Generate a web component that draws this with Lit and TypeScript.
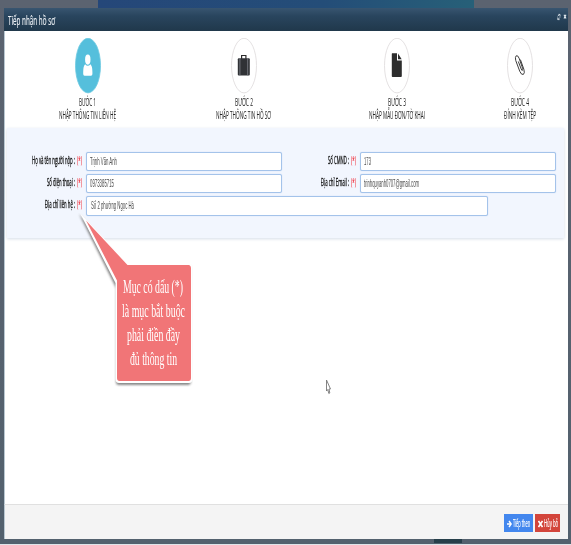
import { LitElement, html, css, svg } from "lit";
import { customElement, property } from "lit/decorators.js";

// One line of condensed text, scaled horizontally to the width it is given.
@customElement("fit-text")
export class FitText extends LitElement {
  static styles = css`
    :host { display: block; flex: none; white-space: nowrap; }
    .run { display: inline-block; vertical-align: top; transform-origin: 0 0; }
  `;
  @property({ type: Number }) w = 0;
  @property() text = "";

  render() {
    return html`<span class="run">${this.text}</span>`;
  }

  updated() {
    const run = this.renderRoot.querySelector<HTMLElement>(".run")!;
    run.style.transform = "none";
    const natural = run.getBoundingClientRect().width;
    this.style.width = `${this.w}px`;
    run.style.marginRight = `${this.w - natural}px`;
    run.style.transform = `scaleX(${this.w / natural})`;
  }
}

const line = (text: string, w: number, cls: string) =>
  html`<fit-text class=${cls} .w=${w} .text=${text}></fit-text>`;

const steps = [
  {
    no: "BƯỚC 1", nw: 17, title: "NHẬP THÔNG TIN LIÊN HỆ", tw: 57, cls: "s1 active",
    icon: svg`<ellipse cx="12.8" cy="21.6" rx="2.7" ry="5.1" fill="#fff"/><path fill="#fff" d="M10.1 26.2Q12.8 29.4 15.4 26.2Q17.4 28 17.4 34V36Q17.4 37.8 16 37.8H9.6Q8.2 37.8 8.2 36V34Q8.2 28 10.1 26.2Z"/>`,
  },
  {
    no: "BƯỚC 2", nw: 18, title: "NHẬP THÔNG TIN HỒ SƠ", tw: 55, cls: "s2",
    icon: svg`<path fill="none" stroke="#2b2b2b" stroke-width="1.2" d="M10.6 21V17.5H14.9V21"/><rect x="6.8" y="20.2" width="12" height="17.4" rx="1" fill="#303236"/><path stroke="#83868d" stroke-width=".8" d="M8.9 20.2V37.6M16.7 20.2V37.6"/>`,
  },
  {
    no: "BƯỚC 3", nw: 18, title: "NHẬP MẪU ĐƠN/TỜ KHAI", tw: 56, cls: "s3",
    icon: svg`<path fill="#2d2d2d" d="M8 15.2H13V22.5H17.8V38Q17.8 39 17 39H8.6Q7.8 39 7.8 38V16Z"/><path fill="#2d2d2d" d="M14 15.4L17.7 21.3H14Z"/>`,
  },
  {
    no: "BƯỚC 4", nw: 18, title: "ĐÍNH KÈM TỆP", tw: 32, cls: "s4",
    icon: svg`<path fill="none" stroke="#333" stroke-width=".95" d="M11.3 23.5L14.2 31Q15.4 33.6 15.7 31.8Q15.8 30.6 15 28.6L12.1 20.2Q10.6 16.8 9.2 17.8Q7.9 19 8.7 22.4L12.8 33.4Q14.6 37.4 16.4 36.4Q18 35.2 16.9 31.4L13.4 21.6"/>`,
  },
];

@customElement("app-root")
export class AppRoot extends LitElement {
  static styles = css`
    :host {
      display: block; position: relative; box-sizing: border-box;
      width: 571px; height: 545px; overflow: hidden;
      padding: 8px 3px 6px 4px;
      background: linear-gradient(#5b6370, #53616e);
      font-family: "Open Sans", "Noto Sans", sans-serif;
    }
    .page-top {
      position: absolute; left: 98px; top: 0; width: 376px; height: 8px;
      background: linear-gradient(90deg, #254779, #244d78 60%, #276078);
    }
    .page-bottom { position: absolute; left: 434px; top: 539px; width: 28px; height: 4px; background: #263f4a; }
    .page-edge { position: absolute; left: 0; top: 544px; width: 571px; height: 1px; background: #dfe5e9; }
    .dialog { position: relative; display: flex; flex-direction: column; height: 531px; background: #fff; }
    header {
      display: flex; justify-content: space-between; box-sizing: border-box;
      height: 23px; padding: 0 1px 0 4px;
      background: linear-gradient(#385570, #29455e 35%, #20384b);
    }
    .heading { font-size: 11.8px; line-height: 25px; color: #eef2f6; -webkit-text-stroke: .15px; }
    .tools { margin-top: 4px; }
    main { flex: 1; border-left: 1px solid #b9c8d2; }
    .steps { display: flex; height: 97px; }
    .step { display: flex; flex-direction: column; align-items: center; box-sizing: border-box; padding-top: 7px; flex: none; }
    .s1 { width: 57px; margin-left: 54px; }
    .s2 { width: 55px; margin-left: 100px; }
    .s3 { width: 56px; margin-left: 98px; }
    .s4 { width: 32px; margin-left: 79px; }
    .ring { display: block; flex: none; margin-bottom: 1px; }
    .rim { fill: #fff; stroke: #ddd9db; stroke-width: .8; }
    .active .rim { fill: #55bfdc; stroke: #6cc9e1; }
    .cap { font-size: 10.8px; line-height: 13px; color: #222; }
    .panel {
      display: flex; flex-direction: column; box-sizing: border-box;
      height: 110px; margin: 0 4px 0 2px; padding-top: 24px;
      background: #f2f6fe; box-shadow: 0 1px 3px #d5dde8;
    }
    .row { display: flex; height: 22px; }
    .label { display: flex; justify-content: flex-end; box-sizing: border-box; width: 79px; gap: 2px; padding-right: 4px; flex: none; }
    .second { width: 78px; }
    .name, .req { font-size: 10.8px; line-height: 16px; color: #111; -webkit-text-stroke: .35px; }
    .req { color: #f0303c; -webkit-text-stroke: .2px; }
    .field {
      box-sizing: border-box; display: flex; width: 196px; height: 19px; padding-left: 3px;
      background: #fff; border: 1px solid #a4c3ea; border-radius: 2px; box-shadow: 0 0 1px #a9c7ef; flex: none;
    }
    .wide { width: 402px; height: 20px; padding-left: 4px; }
    .val { font-family: "Liberation Sans", sans-serif; font-size: 10.7px; line-height: 17px; color: #4c4c4c; }
    .wide .val { line-height: 17px; }
    footer {
      display: flex; justify-content: flex-end; align-items: flex-start; gap: 2px; box-sizing: border-box;
      height: 35px; padding: 9px 8px 0 0; background: #f4f4f4;
      border-top: 1px solid #e0e0e0; border-left: 1px solid #b9c8d2;
    }
    .btn { display: flex; align-items: flex-start; gap: 1px; box-sizing: border-box; height: 18px; padding-left: 3px; }
    .btn svg { flex: none; margin-top: 6px; }
    .next { width: 29px; background: #4387ee; }
    .cancel { width: 25px; background: #d3453b; }
    .btn-t { font-size: 10.8px; line-height: 18px; color: #fff; -webkit-text-stroke: .2px; }
    .callout { position: absolute; left: 70px; top: 205px; width: 135px; height: 190px; }
    .note {
      position: absolute; left: 115px; top: 275px; width: 76px;
      display: flex; flex-direction: column; align-items: center;
      font-family: "Liberation Serif", serif; font-size: 19.4px; line-height: 24px; color: #fff;
    }
    .cursor { position: absolute; left: 325px; top: 379px; }
  `;

  private label(text: string, w: number, second = false) {
    return html`<div class="label ${second ? "second" : ""}">
      ${line(text, w, "name")}${line("(*)", 5, "req")}
    </div>`;
  }

  render() {
    return html`
      <div class="page-top"></div>
      <div class="page-bottom"></div>
      <div class="page-edge"></div>
      <div class="dialog">
        <header>
          ${line("Tiếp nhận hồ sơ", 47, "heading")}
          <svg class="tools" width="10" height="9" fill="none" stroke="#e4ebf0" stroke-width=".8">
            <path d="M.6 4.2L2.600 2.600M1.400 2.400H3V4.600M3 5.400L1 7.400M.8 5.400V7.600H2.600" />
            <path stroke-width="1.1" d="M7 2.8L9 6.6M9 2.8L7 6.6" />
          </svg>
        </header>
        <main>
          <div class="steps">
            ${steps.map((s) => html`<div class="step ${s.cls}">
              <svg class="ring" width="26" height="56">
                <ellipse class="rim" cx="13" cy="27.6" rx="12.5" ry="27.3" />${s.icon}
              </svg>
              ${line(s.no, s.nw, "cap")}
              ${line(s.title, s.tw, "cap")}
            </div>`)}
          </div>
          <div class="panel">
            <div class="row">
              ${this.label("Họ và tên người nộp :", 43)}
              <div class="field">${line("Trịnh Văn Anh", 27, "val")}</div>
              ${this.label("Số CMND :", 21, true)}
              <div class="field">${line("173", 7, "val")}</div>
            </div>
            <div class="row">
              ${this.label("Số điện thoại :", 28)}
              <div class="field">${line("0973385715", 24, "val")}</div>
              ${this.label("Địa chỉ Email :", 28, true)}
              <div class="field">${line("trinhquyanh0707@gmail.com", 55, "val")}</div>
            </div>
            <div class="row">
              ${this.label("Địa chỉ liên hệ :", 30)}
              <div class="field wide">${line("Số 2 phường Ngọc Hà", 43, "val")}</div>
            </div>
          </div>
        </main>
        <footer>
          <div class="btn next">
            <svg width="5" height="8"><path fill="none" stroke="#fff" stroke-width="1.4" d="M0 4H4M2 1L4.2 4L2 7" /></svg>
            ${line("Tiếp theo", 17, "btn-t")}
          </div>
          <div class="btn cancel">
            <svg width="5" height="8"><path stroke="#fff" stroke-width="1.6" d="M.5 1L4.5 7M4.5 1L.5 7" /></svg>
            ${line("Hủy bỏ", 14, "btn-t")}
          </div>
        </footer>
      </div>
      <svg class="callout" viewBox="70 205 135 190">
        <defs><filter id="soft" x="-20%" y="-20%" width="140%" height="140%"><feGaussianBlur stdDeviation="1" /></filter></defs>
        <path fill="#6b6b6b" opacity=".8" filter="url(#soft)"
          d="M79 214L126 266H189Q191 266 191 269V381Q191 385 188 385H119Q116 385 116 382V288Z" />
        <path fill="#fff" d="M80 213L128.5 264H189Q192.5 264 192.5 268V379Q192.5 383 189 383H119Q115.5 383 115.5 379V283Z" />
        <path fill="#f17577" d="M86 220.5L127.5 265H188.5Q191 265 191 268.5V378Q191 381 188.5 381H119.5Q117 381 117 378V280.5Z" />
      </svg>
      <div class="note">
        ${line("Mục có dấu (*)", 60, "")}
        ${line("là mục bắt buộc", 63, "")}
        ${line("phải điền đầy", 53, "")}
        ${line("đủ thông tin", 47, "")}
      </div>
      <svg class="cursor" width="8" height="17">
        <path fill="#fff" stroke="#777" stroke-width=".9" d="M1.5 1V12L2.8 10.5L3.8 14.5L4.8 14L4 10H5.5Z" />
      </svg>
    `;
  }
}
